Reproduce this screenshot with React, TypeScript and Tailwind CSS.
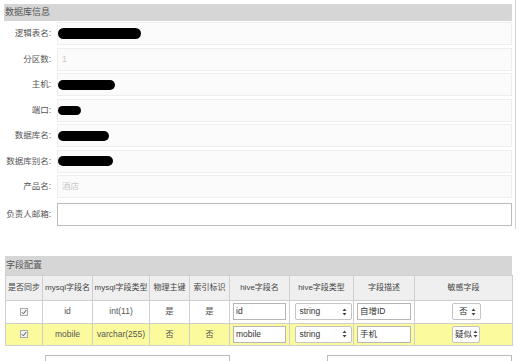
import React from "react";

const font = "font-['Liberation_Sans','Noto_Sans_CJK_SC',sans-serif]";

type Row = {
    label: string;
    blob?: number;
    blobH?: number;
    value?: string;
    editable?: boolean;
};

const rows: Row[] = [
    { label: "逻辑表名:", blob: 83, blobH: 11 },
    { label: "分区数:", value: "1" },
    { label: "主机:", blob: 57, blobH: 10 },
    { label: "端口:", blob: 23, blobH: 9 },
    { label: "数据库名:", blob: 51, blobH: 10 },
    { label: "数据库别名:", blob: 55, blobH: 10 },
    { label: "产品名:", value: "酒店" },
    { label: "负责人邮箱:", editable: true },
];

function Arrows() {
    return (
        <svg width="5" height="8" viewBox="0 0 5 8" className="shrink-0">
            <path d="M2.5 0.5 L4.5 3 L0.5 3 Z" fill="#444" />
            <path d="M2.5 7.5 L4.5 5 L0.5 5 Z" fill="#444" />
        </svg>
    );
}

function Check() {
    return (
        <span className="inline-flex h-[8px] w-[8px] items-center justify-center border border-[#a8a8a8] bg-[#f4f4f4] align-middle">
            <svg width="6" height="6" viewBox="0 0 6 6">
                <path d="M0.8 3.2 L2.4 4.8 L5.2 1" stroke="#555" strokeWidth="1" fill="none" />
            </svg>
        </span>
    );
}

function TextBox({ value, w }: { value: string; w: string }) {
    return (
        <div className={`${w} flex h-[17px] items-center border border-[#b5b5b5] bg-white pl-[2px] text-left text-[8.5px] text-[#333] whitespace-nowrap`}>
            {value}
        </div>
    );
}

function Select({ value, w, pad }: { value: string; w: string; pad: string }) {
    return (
        <div className={`${w} ${pad} inline-flex h-[17px] items-center justify-between gap-[1px] rounded-[2px] border border-[#c4c4c4] bg-white text-[8.5px] text-[#333] whitespace-nowrap`}>
            <span>{value}</span>
            <Arrows />
        </div>
    );
}

export default function App() {
    const fields = [
        { name: "id", type: "int(11)", pk: "是", idx: "是", hive: "id", desc: "自增ID", sens: "否", yellow: false },
        { name: "mobile", type: "varchar(255)", pk: "否", idx: "否", hive: "mobile", desc: "手机", sens: "疑似", yellow: true },
    ];

    const th = "border border-[#cfcfcf] px-0 font-normal text-[8px] text-[#444] text-center whitespace-nowrap";
    const td = "border border-[#cfcfcf] px-0 text-[8.5px] text-[#555] text-center whitespace-nowrap";

    return (
        <div className={`h-[361px] w-[519px] overflow-hidden bg-white ${font}`}>
            {/* 数据库信息 */}
            <div className="w-[516px] border-r border-[#d4d4d4] pb-[3px] pl-[4px] pr-[3px] pt-[4px]">
                <div className="h-[17px] bg-[#d6d6d6] pl-[1px] text-[9px] leading-[17px] text-[#555]">
                    数据库信息
                </div>
                <div className="mt-[1px] flex flex-col gap-[2.5px]">
                    {rows.map((r) => (
                        <div key={r.label} className={`flex items-center ${r.editable ? "mt-[2px]" : ""}`}>
                            <div className="w-[47px] text-right text-[8.5px] text-[#555] whitespace-nowrap">
                                {r.label}
                            </div>
                            {r.editable ? (
                                <div className="ml-[6px] h-[23px] flex-1 border border-[#bcbcbc] bg-white" />
                            ) : (
                                <div className="ml-[6px] flex h-[23px] flex-1 items-center border border-[#eeeeee] bg-[#fbfbfb]">
                                    {r.blob ? (
                                        <span
                                            className="rounded-full bg-black"
                                            style={{ width: r.blob, height: r.blobH }}
                                        />
                                    ) : (
                                        <span className="pl-[4px] text-[8.5px] text-[#c8c8c8]">{r.value}</span>
                                    )}
                                </div>
                            )}
                        </div>
                    ))}
                </div>
            </div>

            {/* 字段配置 */}
            <div className="ml-[5px] mt-[27px] w-[507px]">
                <div className="h-[19px] bg-[#d6d6d6] pl-[1px] text-[9px] leading-[19px] text-[#555]">
                    字段配置
                </div>
                <table className="w-[507px] table-fixed border-collapse">
                    <colgroup>
                        <col className="w-[37px]" />
                        <col className="w-[50px]" />
                        <col className="w-[57px]" />
                        <col className="w-[40px]" />
                        <col className="w-[40px]" />
                        <col className="w-[60px]" />
                        <col className="w-[64px]" />
                        <col className="w-[61px]" />
                        <col className="w-[98px]" />
                    </colgroup>
                    <thead>
                        <tr className="h-[25px] bg-[#efefef]">
                            <th className={th}>是否同步</th>
                            <th className={th}>mysql字段名</th>
                            <th className={th}>mysql字段类型</th>
                            <th className={th}>物理主键</th>
                            <th className={th}>索引标识</th>
                            <th className={th}>hive字段名</th>
                            <th className={th}>hive字段类型</th>
                            <th className={th}>字段描述</th>
                            <th className={th}>敏感字段</th>
                        </tr>
                    </thead>
                    <tbody>
                        {fields.map((f) => (
                            <tr key={f.name} className={f.yellow ? "h-[22px] bg-[#fbfb9d]" : "h-[23px] bg-white"}>
                                <td className={td}>
                                    <Check />
                                </td>
                                <td className={td}>{f.name}</td>
                                <td className={td}>{f.type}</td>
                                <td className={td}>{f.pk}</td>
                                <td className={td}>{f.idx}</td>
                                <td className={`${td} pl-[3px]`}>
                                    <TextBox value={f.hive} w="w-[53px]" />
                                </td>
                                <td className={`${td} pl-[3px]`}>
                                    <Select value="string" w="w-[57px]" pad="pl-[4px] pr-[4px]" />
                                </td>
                                <td className={`${td} pl-[3px]`}>
                                    <TextBox value={f.desc} w="w-[54px]" />
                                </td>
                                <td className={td}>
                                    <div className="flex pl-[37px]">
                                        {f.sens === "否" ? (
                                            <Select value="否" w="w-[29px]" pad="pl-[6px] pr-[4px]" />
                                        ) : (
                                            <Select value="疑似" w="w-[28px]" pad="pl-[2px] pr-[2px]" />
                                        )}
                                    </div>
                                </td>
                            </tr>
                        ))}
                    </tbody>
                </table>
            </div>

            {/* 下方输入 */}
            <div className="mt-[9px] flex items-start">
                <div className="ml-[45px] h-[23px] w-[185px] border border-[#bcbcbc] bg-white" />
                <div className="ml-[97px] h-[23px] w-[185px] border border-[#bcbcbc] bg-white" />
            </div>
        </div>
    );
}
